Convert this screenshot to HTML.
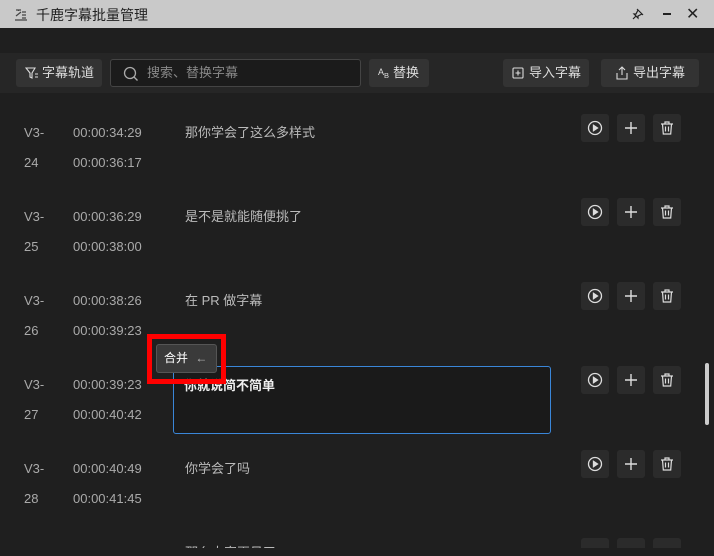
<!DOCTYPE html>
<html><head><meta charset="utf-8"><style>
*{margin:0;padding:0;box-sizing:border-box}
body{width:714px;height:556px;background:#1f1f1f;font-family:"Liberation Sans","Noto Sans CJK SC",sans-serif;overflow:hidden;position:relative;color:#aaa}
.title{position:absolute;left:0;top:0;width:714px;height:28px;background:#c9c9c9;color:#222;font-size:14px}
.tb{position:absolute;left:0;top:53px;width:714px;height:40px;background:#262626}
.btn{position:absolute;background:#333;border-radius:3px;color:#ddd;font-size:13px;line-height:28px;height:28px}
.search{position:absolute;left:110px;top:59px;width:251px;height:28px;border:1px solid #444;border-radius:3px;background:#1b1b1b;color:#888;font-size:13px;line-height:26px;padding-left:36px}
.row{position:absolute;left:0;width:700px;height:84px}
.id{position:absolute;left:24px;font-size:13px;color:#aaa;line-height:30px;top:0}
.t{position:absolute;left:73px;font-size:13px;color:#aaa;line-height:30px;top:0}
.tx{position:absolute;left:185px;top:0;line-height:30px;font-size:13px;color:#bbb}
.ib{position:absolute;top:-4px;width:28px;height:28px;background:#2b2b2b;border-radius:3px}
.ib svg{position:absolute;left:6px;top:6px}
</style></head><body>
<div class="title">
<svg style="position:absolute;left:14px;top:7px" width="14" height="14" viewBox="0 0 14 14" fill="none" stroke="#444" stroke-width="1.2"><path d="M2 3h5M4.5 3v1M2 9l5-4M1 13h12M8 5h4M8 8h4M8 11h4"/></svg>
<span style="position:absolute;left:36px;top:5px">千鹿字幕批量管理</span>
<svg style="position:absolute;left:631px;top:7px" width="14" height="14" viewBox="0 0 14 14" fill="none" stroke="#222" stroke-width="1.2"><path d="M6 2l6 6M7 3L5 7 3 7 7 11 7 9 11 7M5 9L2 12"/></svg>
<div style="position:absolute;left:663px;top:13px;width:8px;height:2px;background:#222"></div>
<span style="position:absolute;left:686px;top:4px;font-size:16px">✕</span>
</div>
<div class="tb"></div>
<div class="btn" style="left:16px;top:59px;width:86px;padding-left:26px">字幕轨道
<svg style="position:absolute;left:9px;top:7px" width="14" height="14" viewBox="0 0 14 14" fill="none" stroke="#ddd" stroke-width="1.1"><path d="M1 2h9L7 7v5L5 11V7z M10 8h3M10 11h3"/></svg></div>
<div class="search">搜索、替换字幕
<svg style="position:absolute;left:12px;top:6px" width="16" height="16" viewBox="0 0 16 16" fill="none" stroke="#aaa" stroke-width="1.3"><circle cx="7" cy="7" r="5.5"/><path d="M11 11l3.5 3.5"/></svg></div>
<div class="btn" style="left:369px;top:59px;width:60px;padding-left:24px">替换
<span style="position:absolute;left:9px;top:-1px;font-size:9px">A<sub>B</sub></span></div>
<div class="btn" style="left:503px;top:59px;width:86px;padding-left:26px">导入字幕
<svg style="position:absolute;left:9px;top:8px" width="12" height="12" viewBox="0 0 12 12" fill="none" stroke="#ddd" stroke-width="1.1"><rect x="1" y="1" width="10" height="10" rx="1"/><path d="M6 3.5v5M3.5 6h5"/></svg></div>
<div class="btn" style="left:601px;top:59px;width:98px;padding-left:32px">导出字幕
<svg style="position:absolute;left:14px;top:7px" width="14" height="14" viewBox="0 0 14 14" fill="none" stroke="#ddd" stroke-width="1.1"><path d="M7 1v8M4 4l3-3 3 3M2 7v6h10V7"/></svg></div>

<div class="row" style="top:118px"><div class="id">V3-<br>24</div><div class="t">00:00:34:29<br>00:00:36:17</div><div class="tx">那你学会了这么多样式</div>
<div class="ib" style="left:581px"><svg width="16" height="16" viewBox="0 0 16 16" fill="none" stroke="#ddd" stroke-width="1.3"><circle cx="8" cy="8" r="6.5"/><path d="M6.5 5.3v5.4L10.5 8z" fill="#ddd"/></svg></div>
<div class="ib" style="left:617px"><svg width="16" height="16" viewBox="0 0 16 16" stroke="#ddd" stroke-width="1.4"><path d="M8 2v12M2 8h12"/></svg></div>
<div class="ib" style="left:653px"><svg width="16" height="16" viewBox="0 0 16 16" fill="none" stroke="#ddd" stroke-width="1.2"><path d="M2 4h12M6 4V2h4v2M3.5 4l.8 10h7.4l.8-10M6.5 6.5v5M9.5 6.5v5"/></svg></div></div>

<div class="row" style="top:202px"><div class="id">V3-<br>25</div><div class="t">00:00:36:29<br>00:00:38:00</div><div class="tx">是不是就能随便挑了</div>
<div class="ib" style="left:581px"><svg width="16" height="16" viewBox="0 0 16 16" fill="none" stroke="#ddd" stroke-width="1.3"><circle cx="8" cy="8" r="6.5"/><path d="M6.5 5.3v5.4L10.5 8z" fill="#ddd"/></svg></div>
<div class="ib" style="left:617px"><svg width="16" height="16" viewBox="0 0 16 16" stroke="#ddd" stroke-width="1.4"><path d="M8 2v12M2 8h12"/></svg></div>
<div class="ib" style="left:653px"><svg width="16" height="16" viewBox="0 0 16 16" fill="none" stroke="#ddd" stroke-width="1.2"><path d="M2 4h12M6 4V2h4v2M3.5 4l.8 10h7.4l.8-10M6.5 6.5v5M9.5 6.5v5"/></svg></div></div>

<div class="row" style="top:286px"><div class="id">V3-<br>26</div><div class="t">00:00:38:26<br>00:00:39:23</div><div class="tx">在 PR 做字幕</div>
<div class="ib" style="left:581px"><svg width="16" height="16" viewBox="0 0 16 16" fill="none" stroke="#ddd" stroke-width="1.3"><circle cx="8" cy="8" r="6.5"/><path d="M6.5 5.3v5.4L10.5 8z" fill="#ddd"/></svg></div>
<div class="ib" style="left:617px"><svg width="16" height="16" viewBox="0 0 16 16" stroke="#ddd" stroke-width="1.4"><path d="M8 2v12M2 8h12"/></svg></div>
<div class="ib" style="left:653px"><svg width="16" height="16" viewBox="0 0 16 16" fill="none" stroke="#ddd" stroke-width="1.2"><path d="M2 4h12M6 4V2h4v2M3.5 4l.8 10h7.4l.8-10M6.5 6.5v5M9.5 6.5v5"/></svg></div></div>

<div class="row" style="top:370px"><div class="id">V3-<br>27</div><div class="t">00:00:39:23<br>00:00:40:42</div>
<div style="position:absolute;left:173px;top:-4px;width:378px;height:68px;border:1px solid #3a86d8;border-radius:3px;background:#1a1a1a;color:#eee;font-size:13px;padding:8px 10px;font-weight:bold">你就说简不简单</div>
<div class="ib" style="left:581px"><svg width="16" height="16" viewBox="0 0 16 16" fill="none" stroke="#ddd" stroke-width="1.3"><circle cx="8" cy="8" r="6.5"/><path d="M6.5 5.3v5.4L10.5 8z" fill="#ddd"/></svg></div>
<div class="ib" style="left:617px"><svg width="16" height="16" viewBox="0 0 16 16" stroke="#ddd" stroke-width="1.4"><path d="M8 2v12M2 8h12"/></svg></div>
<div class="ib" style="left:653px"><svg width="16" height="16" viewBox="0 0 16 16" fill="none" stroke="#ddd" stroke-width="1.2"><path d="M2 4h12M6 4V2h4v2M3.5 4l.8 10h7.4l.8-10M6.5 6.5v5M9.5 6.5v5"/></svg></div></div>

<div class="row" style="top:454px"><div class="id">V3-<br>28</div><div class="t">00:00:40:49<br>00:00:41:45</div><div class="tx">你学会了吗</div>
<div class="ib" style="left:581px"><svg width="16" height="16" viewBox="0 0 16 16" fill="none" stroke="#ddd" stroke-width="1.3"><circle cx="8" cy="8" r="6.5"/><path d="M6.5 5.3v5.4L10.5 8z" fill="#ddd"/></svg></div>
<div class="ib" style="left:617px"><svg width="16" height="16" viewBox="0 0 16 16" stroke="#ddd" stroke-width="1.4"><path d="M8 2v12M2 8h12"/></svg></div>
<div class="ib" style="left:653px"><svg width="16" height="16" viewBox="0 0 16 16" fill="none" stroke="#ddd" stroke-width="1.2"><path d="M2 4h12M6 4V2h4v2M3.5 4l.8 10h7.4l.8-10M6.5 6.5v5M9.5 6.5v5"/></svg></div></div>

<div class="row" style="top:538px;height:10px;overflow:hidden"><div class="id">V3-</div><div class="t">00:00:41:50</div><div class="tx">那么大家再见了</div>
<div class="ib" style="left:581px;top:0"></div><div class="ib" style="left:617px;top:0"></div><div class="ib" style="left:653px;top:0"></div></div>
<div style="position:absolute;left:0;top:548px;width:714px;height:8px;background:#1f1f1f"></div>

<div style="position:absolute;left:705px;top:363px;width:4px;height:62px;background:#ccc;border-radius:2px"></div>

<div style="position:absolute;left:147px;top:334px;width:79px;height:50px;border:5px solid #ff0000"></div>
<div style="position:absolute;left:156px;top:344px;width:61px;height:29px;background:#3a3a3a;border:1px solid #555;border-radius:3px;color:#fff;font-size:12px;line-height:27px;padding-left:7px">合并 <span style="color:#bbb;margin-left:4px">←</span></div>
</body></html>
